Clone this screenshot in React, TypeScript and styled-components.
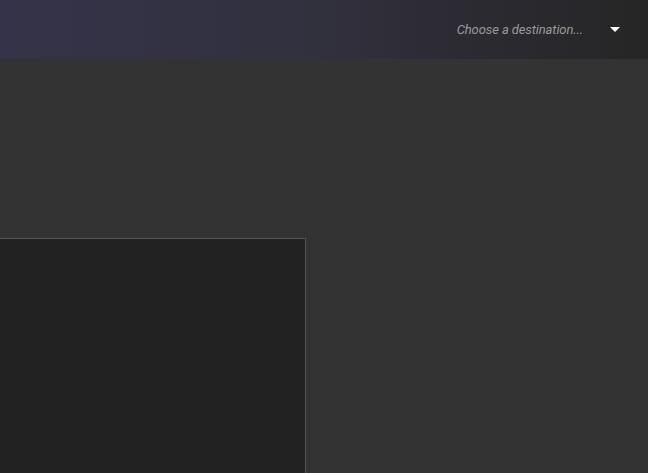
import React from "react";
import styled, { createGlobalStyle } from "styled-components";

const Global = createGlobalStyle`
  html, body { margin: 0; padding: 0; background: #333333; overflow: hidden; }
  body { font-family: Roboto, "Noto Sans", sans-serif; }
`;

const Page = styled.div`
  width: 648px;
  height: 473px;
  display: flex;
  flex-direction: column;
  background: #333333;
  overflow: hidden;
`;

const Header = styled.header`
  height: 59px;
  flex: none;
  display: flex;
  align-items: center;
  justify-content: flex-end;
  padding-right: 28px;
  background: linear-gradient(90deg, #353349 0%, #32313f 45%, #2a292f 80%, #262626 100%);
`;

const Select = styled.div`
  display: flex;
  align-items: center;
  gap: 27px;
`;

const Placeholder = styled.span`
  font-family: Roboto, sans-serif;
  font-style: italic;
  font-size: 13px;
  color: #9a9a9a;
  letter-spacing: -0.1px;
`;

const Caret = styled.span`
  width: 0;
  height: 0;
  border-left: 5px solid transparent;
  border-right: 5px solid transparent;
  border-top: 5px solid #ffffff;
`;

const Body = styled.main`
  flex: 1;
  display: flex;
  flex-direction: column;
  padding-top: 179px;
`;

const Panel = styled.div`
  width: 305px;
  flex: 1;
  background: #222222;
  border-top: 1px solid #555555;
  border-right: 1px solid #555555;
`;

export default function App() {
  return (
    <>
      <Global />
      <Page>
        <Header>
          <Select>
            <Placeholder>Choose a destination...</Placeholder>
            <Caret />
          </Select>
        </Header>
        <Body>
          <Panel />
        </Body>
      </Page>
    </>
  );
}
